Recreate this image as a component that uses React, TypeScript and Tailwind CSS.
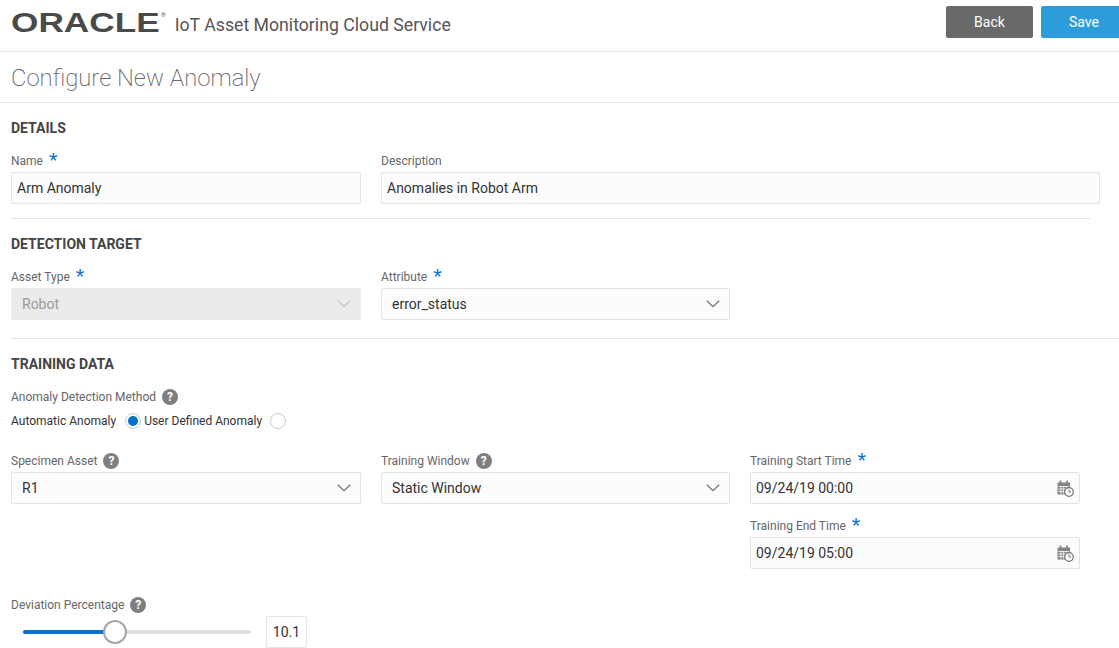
const Star = () => (
  <span className="ml-[6px] text-[#0572ce] text-[22px] leading-[12px] font-['Liberation_Sans',sans-serif] inline-block">*</span>
);

const Help = () => (
  <span className="ml-[6px] w-4 h-4 rounded-full bg-[#7f7f7f] text-white text-[12px] leading-4 font-bold text-center inline-block">?</span>
);

const Label = ({ children }: { children: React.ReactNode }) => (
  <div className="h-[24px] pt-[2px] flex items-center text-[12px] text-[#666666]">{children}</div>
);

const TextBox = ({ value }: { value: string }) => (
  <div className="h-[32px] px-[5px] flex items-center bg-[#fcfcfc] border border-[#dfe4e7] rounded-[2px] text-[14px] text-[#333333]">
    {value}
  </div>
);

const Chevron = ({ color }: { color: string }) => (
  <svg width="14" height="8" viewBox="0 0 14 8" fill="none">
    <path d="M0.8 0.8L7 6.6L13.2 0.8" stroke={color} strokeWidth="1.2" />
  </svg>
);

const Select = ({ value, disabled }: { value: string; disabled?: boolean }) => (
  <div
    className={
      disabled
        ? 'h-[32px] pl-[11px] pr-[10px] flex items-center justify-between bg-[#ebebeb] rounded-[2px] text-[14px] text-[#9a9a9a]'
        : 'h-[32px] pl-[10px] pr-[9px] flex items-center justify-between bg-[#fcfcfc] border border-[#dfe4e7] rounded-[2px] text-[14px] text-[#333333]'
    }
  >
    {value}
    <Chevron color={disabled ? '#c8c8c8' : '#707070'} />
  </div>
);

const CalendarClock = () => (
  <svg width="17" height="17" viewBox="0 0 17 17" fill="none">
    <path d="M0.5 2.5h12.5v12H0.5z" fill="#858585" />
    <path d="M3.5 0.5v3M10 0.5v3" stroke="#858585" strokeWidth="1.8" />
    <path d="M1.5 6.5h10.5M1.5 9h10.5M1.5 11.5h10.5M4 6v8M6.7 6v8M9.4 6v8" stroke="#fcfcfc" strokeWidth="0.8" />
    <circle cx="12" cy="12" r="4.3" fill="#fcfcfc" stroke="#707070" strokeWidth="1.2" />
    <path d="M12 9.6V12h2.1" stroke="#707070" strokeWidth="1" />
  </svg>
);

const DateBox = ({ value }: { value: string }) => (
  <div className="h-[32px] pl-[5px] pr-[5px] flex items-center justify-between bg-[#fcfcfc] border border-[#dfe4e7] rounded-[2px] text-[14px] text-[#333333]">
    {value}
    <CalendarClock />
  </div>
);

const Heading = ({ children }: { children: React.ReactNode }) => (
  <h2 className="text-[14px] leading-[18px] font-bold text-[#444444] uppercase">{children}</h2>
);

export default function App() {
  return (
    <div className="w-[1119px] h-[648px] overflow-hidden bg-white font-['Roboto',sans-serif]">
      <header className="h-[52px] border-b border-[#e5e5e5] flex items-center justify-between pl-[11px]">
        <div className="flex items-center">
          <div className="w-[148px] h-[20px] -mt-[4px] overflow-visible">
            <span className="block w-[115px] origin-top-left scale-x-[1.28] text-[27.5px] leading-[20px] font-['Liberation_Sans',sans-serif] text-[#4a4a4a] font-bold">
              ORACLE
            </span>
          </div>
          <span className="ml-[2px] self-start text-[6px] leading-[6px] text-[#555555]">®</span>
          <span className="ml-[9px] text-[17.7px] text-[#555555]">IoT Asset Monitoring Cloud Service</span>
        </div>
        <div className="flex gap-2 -mt-[7px]">
          <button className="w-[87px] h-[32px] bg-[#696969] rounded-[2px] text-[14px] text-white">Back</button>
          <button className="w-[78px] h-[32px] pl-[8px] bg-[#2d9cdb] rounded-l-[2px] text-[14px] text-white">Save</button>
        </div>
      </header>

      <div className="h-[51px] border-b border-[#e5e5e5] pl-[11px] pt-[4px] flex items-center">
        <h1 className="text-[23.8px] font-extralight text-[#666666]">Configure New Anomaly</h1>
      </div>

      <section className="pl-[11px] pt-[16px]">
        <Heading>Details</Heading>
        <div className="mt-[11px] flex gap-[20px] pr-[19px]">
          <div className="w-[350px]">
            <Label>Name<Star /></Label>
            <TextBox value="Arm Anomaly" />
          </div>
          <div className="flex-1">
            <Label>Description</Label>
            <TextBox value="Anomalies in Robot Arm" />
          </div>
        </div>
        <div className="mt-[14px] mr-[29px] border-b border-[#e5e5e5]" />
      </section>

      <section className="pl-[11px] pt-[16px]">
        <Heading>Detection Target</Heading>
        <div className="mt-[11px] flex gap-[20px]">
          <div className="w-[350px]">
            <Label>Asset Type<Star /></Label>
            <Select value="Robot" disabled />
          </div>
          <div className="w-[349px]">
            <Label>Attribute<Star /></Label>
            <Select value="error_status" />
          </div>
        </div>
        <div className="mt-[18px] border-b border-[#e5e5e5]" />
      </section>

      <section className="pl-[11px] pt-[16px]">
        <Heading>Training Data</Heading>
        <div className="mt-[14px] h-[20px] flex items-center text-[12px] text-[#666666]">
          Anomaly Detection Method<Help />
        </div>
        <div className="mt-[4px] h-[20px] flex items-center text-[12px] text-[#333333]">
          <span>Automatic Anomaly</span>
          <span className="ml-[9px] mr-[3px] w-[16px] h-[16px] rounded-full border border-[#c4ced7] flex items-center justify-center">
            <span className="w-[10px] h-[10px] rounded-full bg-[#0572ce]" />
          </span>
          <span>User Defined Anomaly</span>
          <span className="ml-[8px] w-[16px] h-[16px] rounded-full border border-[#c4ced7]" />
        </div>
        <div className="mt-[17px] flex gap-[20px]">
          <div className="w-[350px]">
            <Label>Specimen Asset<Help /></Label>
            <Select value="R1" />
          </div>
          <div className="w-[349px]">
            <Label>Training Window<Help /></Label>
            <Select value="Static Window" />
          </div>
          <div className="w-[330px]">
            <Label>Training Start Time<Star /></Label>
            <DateBox value="09/24/19 00:00" />
            <div className="mt-[9px]">
              <Label>Training End Time<Star /></Label>
              <DateBox value="09/24/19 05:00" />
            </div>
          </div>
        </div>
        <div className="mt-[23px]">
          <Label>Deviation Percentage<Help /></Label>
          <div className="ml-[12px] flex items-center">
            <div className="w-[228px] h-[4px] rounded-full bg-[#e0e0e0] relative">
              <div className="w-[92px] h-[4px] rounded-full bg-[#0572ce]" />
              <div className="absolute left-[80px] -top-[10px] w-[24px] h-[24px] rounded-full bg-white border-2 border-[#a6a6a6]" />
            </div>
            <div className="ml-[15px] w-[41px] h-[32px] border border-[#e5e5e5] rounded-[2px] flex items-center justify-center text-[14px] text-[#333333]">
              10.1
            </div>
          </div>
        </div>
      </section>
    </div>
  );
}
